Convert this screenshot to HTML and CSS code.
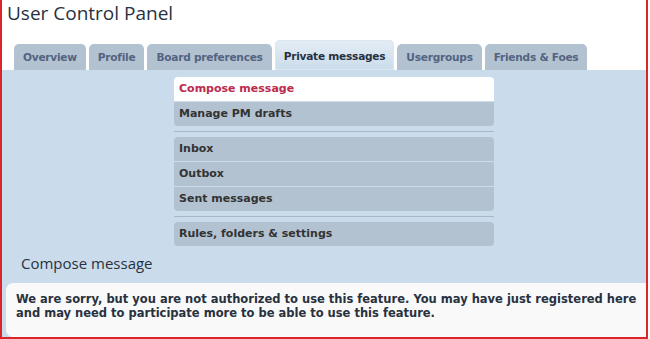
FILE: index.html
```html
<!DOCTYPE html>
<html lang="en">
<head>
    <meta charset="UTF-8">
    <title>User Control Panel</title>
    <link rel="stylesheet" href="styles.css">
</head>
<body>
    <div class="frame">
        <!-- Page title -->
        <h2 class="page-title">User Control Panel</h2>

        <!-- Tabs -->
        <ul class="tabs">
            <li><a href="#">Overview</a></li>
            <li><a href="#">Profile</a></li>
            <li><a href="#">Board preferences</a></li>
            <li class="active"><a href="#">Private messages</a></li>
            <li><a href="#">Usergroups</a></li>
            <li><a href="#">Friends &amp; Foes</a></li>
        </ul>

        <!-- Control panel -->
        <div class="cp-panel">
            <div class="cp-menu">
                <ul class="menu-group">
                    <li class="current"><a href="#">Compose message</a></li>
                    <li><a href="#">Manage PM drafts</a></li>
                </ul>
                <hr class="menu-sep">
                <ul class="menu-group">
                    <li><a href="#">Inbox</a></li>
                    <li><a href="#">Outbox</a></li>
                    <li><a href="#">Sent messages</a></li>
                </ul>
                <hr class="menu-sep">
                <ul class="menu-group">
                    <li><a href="#">Rules, folders &amp; settings</a></li>
                </ul>
            </div>

            <h3 class="cp-heading">Compose message</h3>

            <div class="notice">
                <p>We are sorry, but you are not authorized to use this feature. You may have just registered here and may need to participate more to be able to use this feature.</p>
            </div>
        </div>
    </div>
</body>
</html>
```

FILE: styles.css
```css
/* Reset */
* {
    margin: 0;
    padding: 0;
    box-sizing: border-box;
}

body {
    font-family: "DejaVu Sans", Verdana, sans-serif;
    background-color: #fff;
}

/* Screenshot frame */
.frame {
    width: 648px;
    height: 339px;
    border-left: 2px solid #d9262a;
    border-right: 2px solid #d9262a;
    border-bottom: 2px solid #d9262a;
    overflow: hidden;
    display: flex;
    flex-direction: column;
}

.page-title {
    font-family: "Open Sans", "DejaVu Sans", sans-serif;
    font-weight: normal;
    font-size: 19px;
    line-height: 26px;
    color: #28313f;
    padding-left: 5px;
    height: 40px;
}

/* Tabs */
.tabs {
    list-style: none;
    display: flex;
    align-items: flex-end;
    gap: 3px;
    padding-left: 12px;
    height: 30px;
}

.tabs li a {
    display: block;
    height: 26px;
    line-height: 26px;
    padding: 0 9px;
    background-color: #b2c2d1;
    border-radius: 5px 5px 0 0;
    color: #536482;
    font-size: 10.6px;
    letter-spacing: -0.25px;
    font-weight: bold;
    text-decoration: none;
}

.tabs li.active a {
    height: 30px;
    line-height: 32px;
    background: linear-gradient(#e4edf5, #cadceb);
    color: #28313f;
    box-shadow: inset 0 0 0 1px #dbe6ef;
}

/* Panel */
.cp-panel {
    flex: 1;
    background-color: #cadceb;
    padding-top: 7px;
    display: flex;
    flex-direction: column;
}

.cp-menu {
    width: 320px;
    margin-left: 172px;
}

.menu-group {
    list-style: none;
}

.menu-group li a {
    display: block;
    height: 25px;
    line-height: 24px;
    padding-left: 5px;
    background-color: #b2c2d1;
    color: #333;
    font-size: 11px;
    font-weight: bold;
    text-decoration: none;
    border-bottom: 1px solid #cfdae4;
}

.menu-group li:first-child a {
    border-radius: 4px 4px 0 0;
}

.menu-group li:last-child a {
    height: 24px;
    border-radius: 0 0 4px 4px;
    border-bottom: none;
}

.menu-group li:only-child a {
    border-radius: 4px;
}

.menu-group li.current a {
    background-color: #fff;
    color: #bc2a4d;
    border-bottom: 1px solid #cadceb;
}

.menu-sep {
    border: none;
    border-top: 1px solid #a6b8c9;
    margin: 5px 0;
}

.cp-heading {
    font-family: "Open Sans", "DejaVu Sans", sans-serif;
    font-weight: normal;
    font-size: 15px;
    color: #28313f;
    margin: 7px 0 0 19px;
    height: 30px;
}

.notice {
    flex: 1;
    margin-left: 4px;
    background-color: #f9f9f9;
    border-radius: 7px 0 0 7px;
    padding: 9px 2px 8px 10px;
}

.notice p {
    font-size: 11.5px;
    font-weight: bold;
    line-height: 14px;
    color: #28313f;
}
```
